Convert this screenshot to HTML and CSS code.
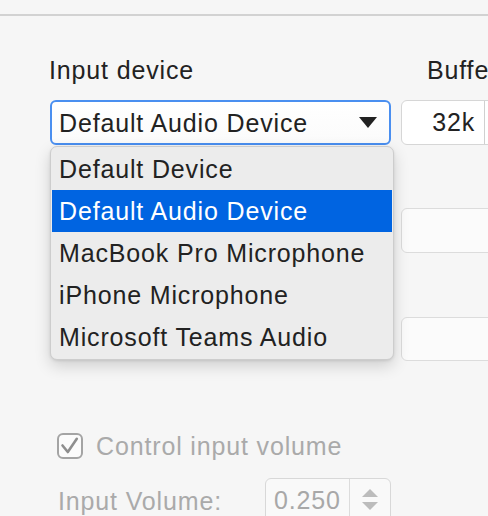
FILE: index.html
```html
<!DOCTYPE html>
<html>
<head>
<meta charset="utf-8">
<link rel="stylesheet" href="styles.css">
</head>
<body>
<div class="window">
  <div class="rule"></div>
  <div class="content">
    <div class="grid">
      <div class="label">Input device</div>
      <div class="label buf-label">Buffer size</div>

      <div class="select">
        <span class="select-text">Default Audio Device</span>
        <svg class="caret" width="18" height="11" viewBox="0 0 18 11"><path d="M0 0 H18 L9 11 Z" fill="#222"/></svg>
      </div>
      <div class="field buffer">
        <div class="buffer-value">32k</div>
        <div class="buffer-step"></div>
      </div>

      <div class="spacer"></div>
      <div class="field blank f2"></div>

      <div class="spacer"></div>
      <div class="field blank f3"></div>
    </div>

    <div class="check-row">
      <span class="checkbox">
        <svg width="26" height="26" viewBox="0 0 26 26"><path d="M5.5 12.5 L10.8 19 L19.8 5.8" fill="none" stroke="#8e8e8e" stroke-width="2.6" stroke-linecap="round" stroke-linejoin="round"/></svg>
      </span>
      <span class="check-label">Control input volume</span>
    </div>

    <div class="volume-row">
      <span class="volume-label">Input Volume:</span>
      <div class="stepper">
        <span class="stepper-value">0.250</span>
        <span class="stepper-arrows">
          <svg width="18" height="24" viewBox="0 0 18 24"><path d="M1 8 L9 0 L17 8 Z" fill="#bcbcbc"/><path d="M1 13 L9 21 L17 13 Z" fill="#bcbcbc"/></svg>
        </span>
      </div>
    </div>
  </div>

  <div class="menu">
    <div class="item">Default Device</div>
    <div class="item selected">Default Audio Device</div>
    <div class="item">MacBook Pro Microphone</div>
    <div class="item">iPhone Microphone</div>
    <div class="item">Microsoft Teams Audio</div>
  </div>
</div>
</body>
</html>
```
FILE: styles.css
```css
html, body {
  margin: 0;
  padding: 0;
}
body {
  background: #f6f6f6;
  font-family: "Liberation Sans", Arial, Helvetica, sans-serif;
  font-size: 25px;
  letter-spacing: 0.85px;
  color: #222222;
  width: 488px;
  height: 516px;
  overflow: hidden;
}
.window {
  position: relative;
  width: 488px;
  height: 516px;
  overflow: hidden;
}
.rule {
  margin-top: 14px;
  height: 2px;
  background: #d2d2d2;
}
.content {
  padding-left: 50px;
}
.grid {
  display: grid;
  grid-template-columns: 341px 200px;
  column-gap: 10px;
  margin-top: 40px;
}
.label {
  line-height: 28px;
  height: 28px;
  white-space: nowrap;
  margin-left: -1px;
}
.buf-label {
  padding-left: 27px;
}
.select {
  box-sizing: border-box;
  margin-top: 16px;
  height: 45px;
  border: 2px solid #4a8ff0;
  border-radius: 6px;
  background: linear-gradient(#ffffff, #fbfbfb);
  display: flex;
  align-items: center;
  justify-content: space-between;
  padding: 1px 12px 0 7px;
}
.select-text {
  line-height: 28px;
  white-space: nowrap;
}
.caret {
  display: block;
  margin-top: -2px;
}
.field {
  box-sizing: border-box;
  border: 1px solid #d6d6d6;
  border-radius: 6px;
  background: #ffffff;
  width: 120px;
}
.buffer {
  margin-top: 16px;
  height: 45px;
  display: flex;
}
.buffer-value {
  box-sizing: border-box;
  width: 83px;
  border-right: 1px solid #d0d0d0;
  text-align: right;
  padding-right: 9px;
  line-height: 43px;
}
.blank {
  background: #fbfbfb;
  border-color: #dcdcdc;
}
.f2 {
  margin-top: 63px;
  height: 45px;
}
.f3 {
  margin-top: 64px;
  height: 44px;
}
.check-row {
  display: flex;
  align-items: center;
  margin-top: 72px;
  height: 26px;
}
.checkbox {
  box-sizing: border-box;
  width: 26px;
  height: 26px;
  margin-left: 7px;
  border: 2px solid #a4a4a4;
  border-radius: 6px;
  background: #fbfbfb;
  position: relative;
  display: block;
}
.checkbox svg {
  position: absolute;
  left: -2px;
  top: -2px;
}
.check-label {
  margin-left: 13px;
  color: #aaaaaa;
  line-height: 28px;
  white-space: nowrap;
}
.volume-row {
  display: flex;
  align-items: center;
  margin-top: 19px;
}
.volume-label {
  width: 207px;
  padding-left: 8px;
  color: #aaaaaa;
  line-height: 28px;
  white-space: nowrap;
}
.stepper {
  box-sizing: border-box;
  width: 126px;
  height: 45px;
  border: 1px solid #d8d8d8;
  border-radius: 6px;
  background: #f9f9f9;
  display: flex;
  align-items: center;
}
.stepper-value {
  box-sizing: border-box;
  width: 84px;
  height: 43px;
  line-height: 43px;
  padding-left: 8px;
  color: #a8a8a8;
  border-right: 1px solid #dcdcdc;
}
.stepper-arrows {
  display: flex;
  justify-content: center;
  flex: 1;
  padding-top: 1px;
}
.stepper-arrows svg {
  display: block;
}
.menu {
  position: absolute;
  left: 50px;
  top: 146px;
  width: 344px;
  height: 214px;
  box-sizing: border-box;
  padding: 1px;
  background: #ececec;
  border: 1px solid #cdcdcd;
  border-radius: 7px;
  box-shadow: 0 6px 16px rgba(0, 0, 0, 0.16), 0 1px 3px rgba(0, 0, 0, 0.1);
}
.item {
  height: 42px;
  line-height: 42px;
  padding-left: 7px;
  white-space: nowrap;
  color: #222222;
}
.item.selected {
  background: #0064e1;
  color: #ffffff;
}
```
